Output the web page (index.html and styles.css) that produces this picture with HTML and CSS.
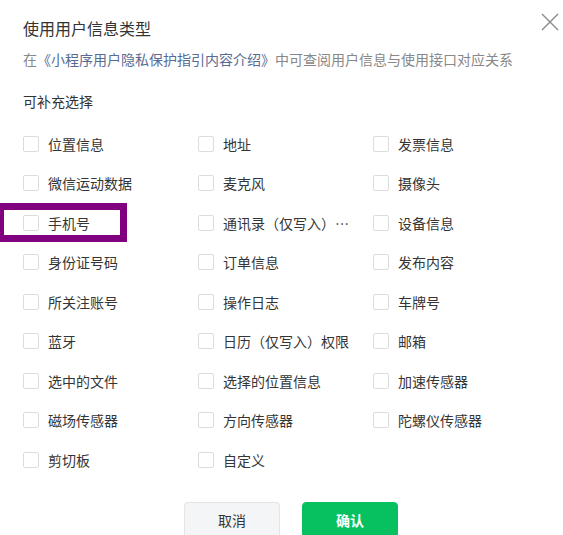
FILE: index.html
```html
<!DOCTYPE html>
<html lang="zh-CN">
<head>
<meta charset="utf-8">
<title>使用用户信息类型</title>
<link rel="stylesheet" href="styles.css">
</head>
<body>
<div class="dialog">
  <button class="close" aria-label="关闭">
    <svg width="18" height="18" viewBox="0 0 18 18"><path d="M1 1 L17 17 M17 1 L1 17" stroke="#8a8a8a" stroke-width="1.4" fill="none"/></svg>
  </button>
  <h1 class="title">使用用户信息类型</h1>
  <p class="desc">在<a class="link" href="#">《小程序用户隐私保护指引内容介绍》</a>中可查阅用户信息与使用接口对应关系</p>
  <p class="section">可补充选择</p>
  <div class="grid">
    <label class="item"><span class="box"></span><span class="text">位置信息</span></label>
    <label class="item"><span class="box"></span><span class="text">地址</span></label>
    <label class="item"><span class="box"></span><span class="text">发票信息</span></label>
    <label class="item"><span class="box"></span><span class="text">微信运动数据</span></label>
    <label class="item"><span class="box"></span><span class="text">麦克风</span></label>
    <label class="item"><span class="box"></span><span class="text">摄像头</span></label>
    <label class="item"><span class="box"></span><span class="text">手机号</span></label>
    <label class="item"><span class="box"></span><span class="text">通讯录（仅写入）权限</span></label>
    <label class="item"><span class="box"></span><span class="text">设备信息</span></label>
    <label class="item"><span class="box"></span><span class="text">身份证号码</span></label>
    <label class="item"><span class="box"></span><span class="text">订单信息</span></label>
    <label class="item"><span class="box"></span><span class="text">发布内容</span></label>
    <label class="item"><span class="box"></span><span class="text">所关注账号</span></label>
    <label class="item"><span class="box"></span><span class="text">操作日志</span></label>
    <label class="item"><span class="box"></span><span class="text">车牌号</span></label>
    <label class="item"><span class="box"></span><span class="text">蓝牙</span></label>
    <label class="item"><span class="box"></span><span class="text">日历（仅写入）权限</span></label>
    <label class="item"><span class="box"></span><span class="text">邮箱</span></label>
    <label class="item"><span class="box"></span><span class="text">选中的文件</span></label>
    <label class="item"><span class="box"></span><span class="text">选择的位置信息</span></label>
    <label class="item"><span class="box"></span><span class="text">加速传感器</span></label>
    <label class="item"><span class="box"></span><span class="text">磁场传感器</span></label>
    <label class="item"><span class="box"></span><span class="text">方向传感器</span></label>
    <label class="item"><span class="box"></span><span class="text">陀螺仪传感器</span></label>
    <label class="item"><span class="box"></span><span class="text">剪切板</span></label>
    <label class="item"><span class="box"></span><span class="text">自定义</span></label>
  </div>
  <div class="footer">
    <button class="btn btn-cancel">取消</button>
    <button class="btn btn-ok">确认</button>
  </div>
  <div class="highlight"></div>
</div>
</body>
</html>
```

FILE: styles.css
```css
* { box-sizing: border-box; }
html, body {
  margin: 0;
  padding: 0;
  background: #fff;
  overflow: hidden;
}
body {
  font-family: "Noto Sans CJK SC", "Noto Sans", sans-serif;
  color: #353535;
}
.dialog {
  position: relative;
  width: 563px;
  height: 535px;
  padding: 15.5px 23px 0 23px;
  overflow: hidden;
}
.close {
  position: absolute;
  top: 13px;
  right: 4px;
  width: 18px;
  height: 18px;
  padding: 0;
  border: 0;
  background: none;
  display: flex;
}
.title {
  margin: 0;
  font-size: 16px;
  font-weight: normal;
  line-height: 24px;
  color: #333;
}
.desc {
  margin: 9px 0 0;
  font-size: 14px;
  line-height: 20px;
  color: #888;
  white-space: nowrap;
}
.link {
  color: #576b95;
  text-decoration: none;
}
.section {
  margin: 22px 0 0;
  font-size: 14px;
  line-height: 20px;
  color: #333;
}
.grid {
  margin-top: 23px;
  display: grid;
  grid-template-columns: 175px 175px 175px;
  grid-auto-rows: 20px;
  row-gap: 19.5px;
}
.item {
  display: flex;
  align-items: center;
  gap: 9px;
  font-size: 14px;
  line-height: 20px;
  color: #353535;
}
.box {
  flex: none;
  width: 16px;
  height: 16px;
  border: 1px solid #dcdcdc;
  border-radius: 2px;
  background: #fff;
}
.text {
  max-width: 127px;
  white-space: nowrap;
  overflow: hidden;
  text-overflow: ellipsis;
}
.footer {
  margin-top: 32.5px;
  display: flex;
  justify-content: center;
  gap: 22px;
  padding-left: 19px;
}
.btn {
  width: 96px;
  height: 36px;
  border-radius: 4px;
  font-family: inherit;
  font-size: 14px;
  padding: 0;
}
.btn-cancel {
  background: #f4f5f7;
  border: 1px solid #e3e4e6;
  color: #353535;
}
.btn-ok {
  background: #07c160;
  border: 1px solid #07c160;
  color: #fff;
  font-weight: bold;
}
.highlight {
  position: absolute;
  left: -3px;
  top: 203px;
  width: 130px;
  height: 39px;
  border: 7px solid #800080;
  pointer-events: none;
}
```
